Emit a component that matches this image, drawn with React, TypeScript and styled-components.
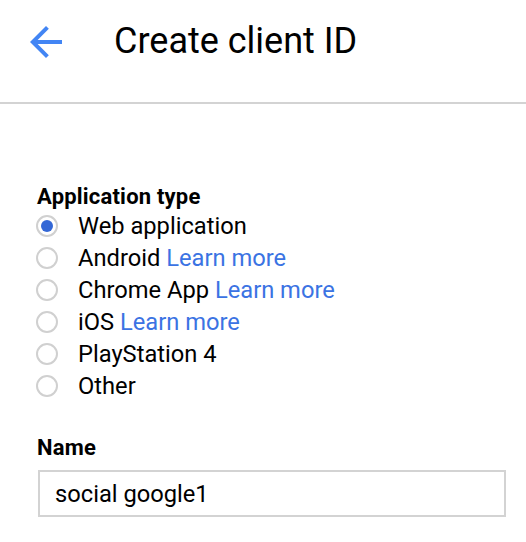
import React from "react";
import styled, { createGlobalStyle } from "styled-components";

const GlobalStyle = createGlobalStyle`
  html, body {
    margin: 0;
    padding: 0;
    background: #ffffff;
  }
  body {
    font-family: Roboto, "Liberation Sans", Arial, sans-serif;
    color: #000;
  }
`;

const Page = styled.div`
  width: 526px;
  min-height: 542px;
  background: #fff;
`;

const Header = styled.header`
  height: 104px;
  display: flex;
  align-items: flex-start;
  padding: 18px 0 0 22px;
  box-sizing: border-box;
  border-bottom: 2px solid #d3d3d3;
`;

const BackButton = styled.button`
  width: 48px;
  height: 48px;
  padding: 0;
  border: 0;
  background: transparent;
  display: flex;
  cursor: pointer;
`;

const Title = styled.h1`
  margin: -1px 0 0 44px;
  font-size: 36px;
  line-height: 48px;
  font-weight: 400;
  color: #000;
`;

const Content = styled.main`
  padding: 80px 20px 0 37px;
`;

const FieldLabel = styled.div<{ $top?: number }>`
  margin-top: ${(p) => p.$top ?? 0}px;
  font-size: 22px;
  line-height: 26px;
  font-weight: 700;
  letter-spacing: 0.2px;
  color: #000;
`;

const RadioList = styled.div`
  display: flex;
  flex-direction: column;
`;

const RadioRow = styled.label`
  display: flex;
  align-items: center;
  height: 32px;
  gap: 20px;
  font-size: 23.7px;
  line-height: 32px;
  color: #000;
  cursor: pointer;
`;

const Circle = styled.span<{ $checked: boolean }>`
  width: 22px;
  height: 22px;
  margin-left: -1px;
  box-sizing: border-box;
  border-radius: 50%;
  border: 2px solid #d0d0d0;
  display: flex;
  align-items: center;
  justify-content: center;
  flex: none;
  &::after {
    content: "";
    width: 12px;
    height: 12px;
    border-radius: 50%;
    background: ${(p) => (p.$checked ? "#3367d6" : "transparent")};
  }
`;

const Link = styled.a`
  color: #3b73e3;
  text-decoration: none;
`;

const NameInput = styled.input`
  display: block;
  margin: 9px 0 0 1px;
  width: 468px;
  height: 47px;
  box-sizing: border-box;
  border: 2px solid #d3d3d3;
  border-radius: 0;
  padding: 0 15px;
  font-family: Roboto, "Liberation Sans", Arial, sans-serif;
  font-size: 23.7px;
  color: #000;
  outline: none;
  background: #fff;
`;

const options: { label: string; learn?: boolean }[] = [
  { label: "Web application" },
  { label: "Android", learn: true },
  { label: "Chrome App", learn: true },
  { label: "iOS", learn: true },
  { label: "PlayStation 4" },
  { label: "Other" },
];

export default function App() {
  const [selected, setSelected] = React.useState(0);
  return (
    <Page>
      <GlobalStyle />
      <Header>
        <BackButton aria-label="Back">
          <svg width="48" height="48" viewBox="0 0 24 24">
            <path
              fill="#4285f4"
              d="M20 11H7.83l5.59-5.59L12 4l-8 8 8 8 1.41-1.41L7.83 13H20v-2z"
            />
          </svg>
        </BackButton>
        <Title>Create client ID</Title>
      </Header>
      <Content>
        <FieldLabel>Application type</FieldLabel>
        <RadioList>
          {options.map((o, i) => (
            <RadioRow key={o.label} onClick={() => setSelected(i)}>
              <Circle $checked={selected === i} />
              <span>
                {o.label}
                {o.learn && (
                  <>
                    {" "}
                    <Link href="#">Learn more</Link>
                  </>
                )}
              </span>
            </RadioRow>
          ))}
        </RadioList>
        <FieldLabel $top={33}>Name</FieldLabel>
        <NameInput defaultValue="social google1" />
      </Content>
    </Page>
  );
}
